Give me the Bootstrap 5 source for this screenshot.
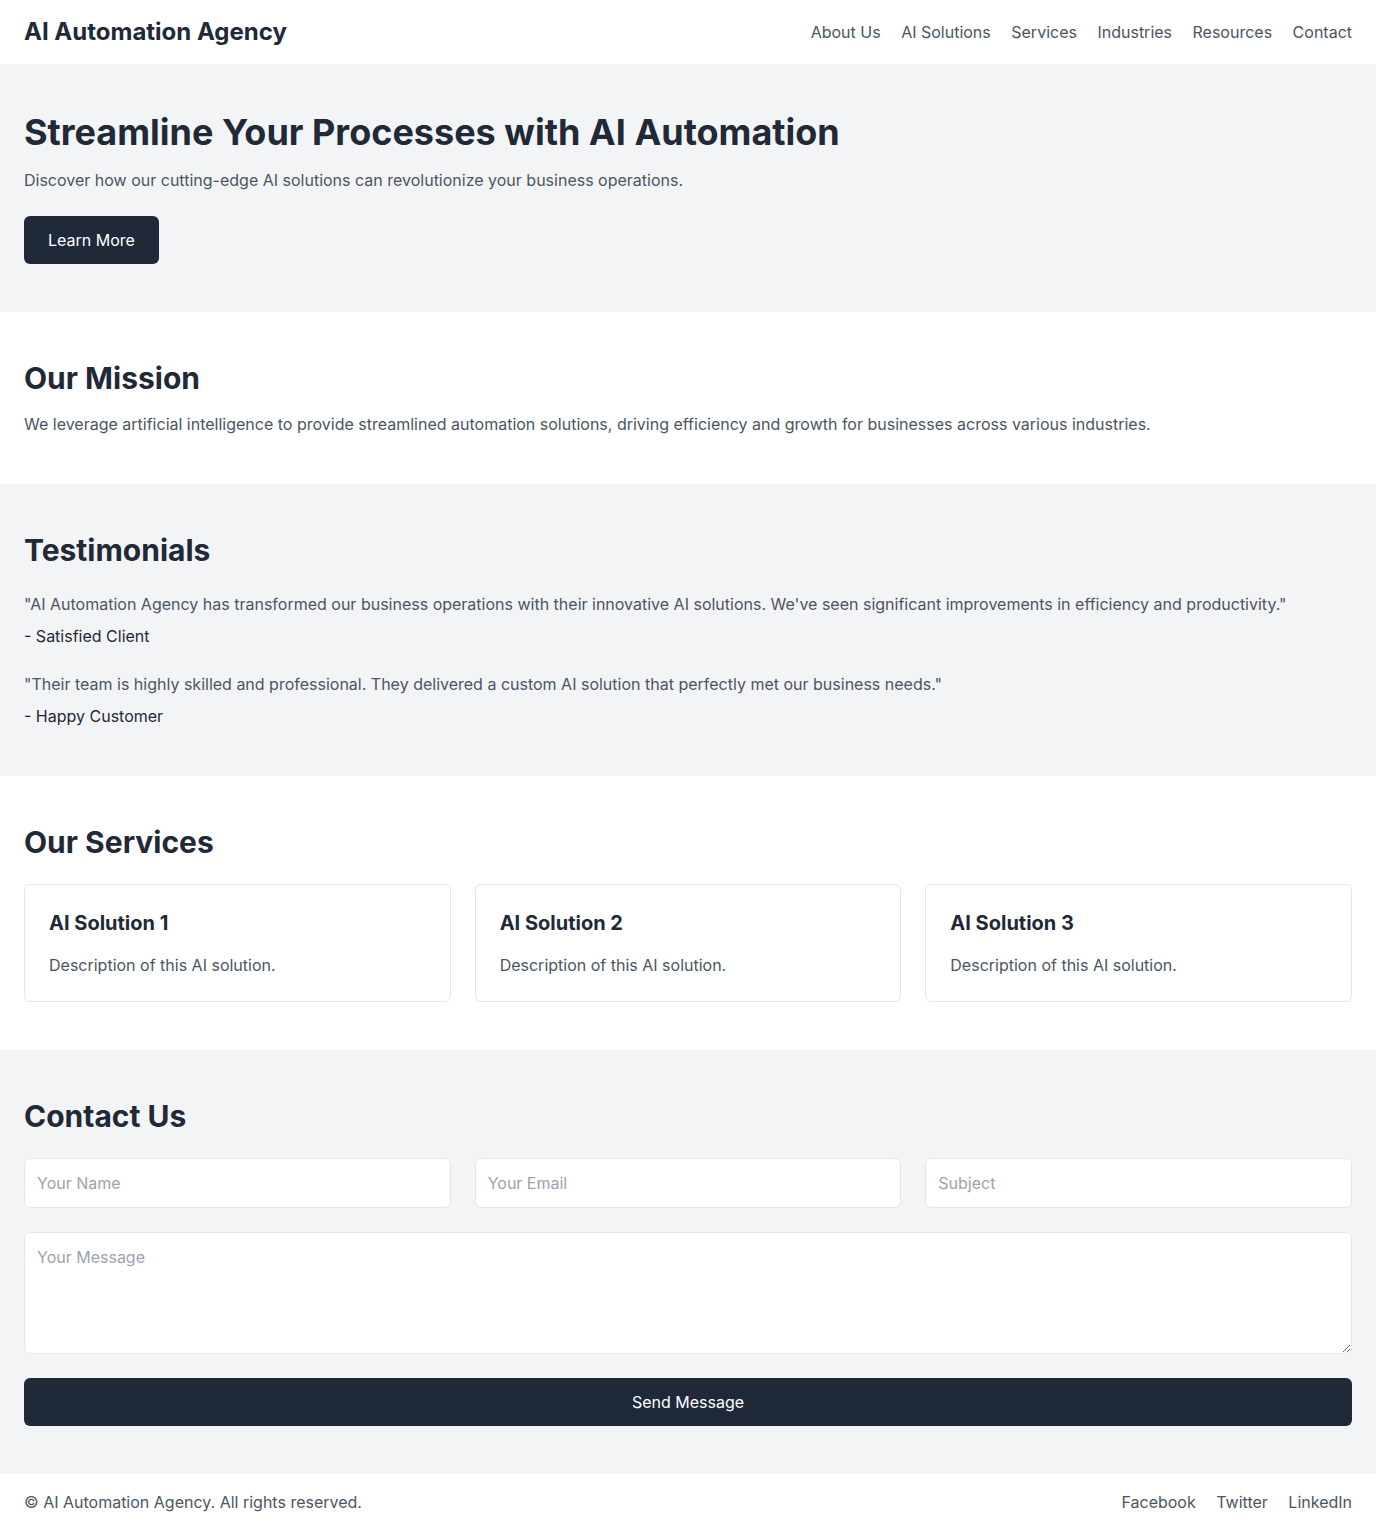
<!DOCTYPE html>
<html lang="en">
<head>
<meta charset="utf-8">
<meta name="viewport" content="width=device-width, initial-scale=1">
<title>AI Automation Agency</title>
<link href="https://cdn.jsdelivr.net/npm/bootstrap@5.3.0/dist/css/bootstrap.min.css" rel="stylesheet">
<style>
  body { font-family: Inter, "Liberation Sans", sans-serif; font-size: 16px; line-height: 24px; color: #1f2937; background: #fff; }
  a, .body-text { color: #4b5563; }
  a { text-decoration: none; }
  a:hover { text-decoration: underline; }
  h1, h2, h3, .brand { font-weight: 700; color: #1f2937; }
  .brand { font-size: 24px; line-height: 32px; }
  h1 { font-size: 36px; line-height: 40px; }
  h2 { font-size: 30px; line-height: 36px; }
  h3 { font-size: 20px; line-height: 28px; }
  .tinted { background: #f3f4f6; }
  .link-row a + a { margin-left: 16px; }
  .btn-ink { --bs-btn-color: #fff; --bs-btn-bg: #1f2937; --bs-btn-border-color: #1f2937; --bs-btn-hover-color: #fff; --bs-btn-hover-bg: #374151; --bs-btn-hover-border-color: #374151; --bs-btn-active-color: #fff; --bs-btn-active-bg: #374151; --bs-btn-border-radius: 6px; border: 0; line-height: 24px; padding: 12px 24px; }
  .card { --bs-card-border-color: #e5e7eb; --bs-card-border-radius: 6px; --bs-card-inner-border-radius: 5px; }
  .form-control { border-color: #e5e7eb; border-radius: 6px; padding: 12px; line-height: 24px; }
  .form-control::placeholder { color: #9ca3af; }
</style>
<script src="https://cdn.jsdelivr.net/npm/bootstrap@5.3.0/dist/js/bootstrap.bundle.min.js" defer></script>
</head>
<body>
<header class="d-flex flex-wrap justify-content-between align-items-center px-4 py-3">
  <div class="brand">AI Automation Agency</div>
  <nav class="link-row" aria-label="Main">
    <a href="#about">About Us</a>
    <a href="#services">AI Solutions</a>
    <a href="#services">Services</a>
    <a href="#industries">Industries</a>
    <a href="#resources">Resources</a>
    <a href="#contact">Contact</a>
  </nav>
</header>
<main>
  <section class="tinted px-4 py-5">
    <h1 class="mb-3">Streamline Your Processes with AI Automation</h1>
    <p class="body-text mb-4">Discover how our cutting-edge AI solutions can revolutionize your business operations.</p>
    <button type="button" class="btn btn-ink d-block">Learn More</button>
  </section>
  <section class="px-4 py-5" id="about">
    <h2 class="mb-3">Our Mission</h2>
    <p class="body-text mb-0">We leverage artificial intelligence to provide streamlined automation solutions, driving efficiency and growth for businesses across various industries.</p>
  </section>
  <section class="tinted px-4 py-5">
    <h2 class="mb-4">Testimonials</h2>
    <div class="d-grid gap-4">
      <div>
        <p class="body-text mb-2">"AI Automation Agency has transformed our business operations with their innovative AI solutions. We've seen significant improvements in efficiency and productivity."</p>
        <p class="mb-0">- Satisfied Client</p>
      </div>
      <div>
        <p class="body-text mb-2">"Their team is highly skilled and professional. They delivered a custom AI solution that perfectly met our business needs."</p>
        <p class="mb-0">- Happy Customer</p>
      </div>
    </div>
  </section>
  <section class="px-4 py-5" id="services">
    <h2 class="mb-4">Our Services</h2>
    <div class="row row-cols-1 row-cols-md-3 g-4">
      <div class="col"><div class="card"><div class="card-body p-4"><h3 class="mb-3">AI Solution 1</h3><p class="body-text mb-0">Description of this AI solution.</p></div></div></div>
      <div class="col"><div class="card"><div class="card-body p-4"><h3 class="mb-3">AI Solution 2</h3><p class="body-text mb-0">Description of this AI solution.</p></div></div></div>
      <div class="col"><div class="card"><div class="card-body p-4"><h3 class="mb-3">AI Solution 3</h3><p class="body-text mb-0">Description of this AI solution.</p></div></div></div>
    </div>
  </section>
  <section class="tinted px-4 py-5" id="contact">
    <h2 class="mb-4">Contact Us</h2>
    <form class="row g-4">
      <div class="col-md-4"><label class="visually-hidden" for="name">Your Name</label><input class="form-control" id="name" type="text" placeholder="Your Name"></div>
      <div class="col-md-4"><label class="visually-hidden" for="email">Your Email</label><input class="form-control" id="email" type="email" placeholder="Your Email"></div>
      <div class="col-md-4"><label class="visually-hidden" for="subject">Subject</label><input class="form-control" id="subject" type="text" placeholder="Subject"></div>
      <div class="col-12"><label class="visually-hidden" for="message">Your Message</label><textarea class="form-control d-block" id="message" rows="4" placeholder="Your Message"></textarea></div>
      <div class="col-12"><button type="submit" class="btn btn-ink d-block w-100">Send Message</button></div>
    </form>
  </section>
</main>
<footer class="d-flex flex-wrap justify-content-between align-items-center px-4 py-3">
  <p class="body-text mb-0">© AI Automation Agency. All rights reserved.</p>
  <nav class="link-row" aria-label="Social">
    <a href="#facebook">Facebook</a>
    <a href="#twitter">Twitter</a>
    <a href="#linkedin">LinkedIn</a>
  </nav>
</footer>
</body>
</html>
